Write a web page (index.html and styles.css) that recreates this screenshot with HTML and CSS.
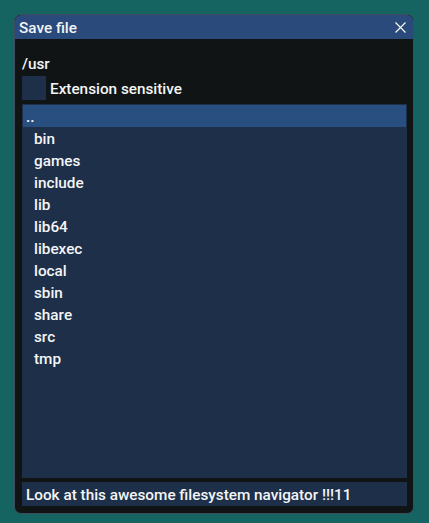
FILE: index.html
```html
<!DOCTYPE html>
<html>
<head>
<meta charset="utf-8">
<link rel="stylesheet" href="styles.css">
</head>
<body>
<div class="window">
  <div class="titlebar">
    <span class="title">Save file</span>
    <svg class="close" width="11" height="11" viewBox="0 0 11 11"><path d="M0.5 0.5 L10.5 10.5 M10.5 0.5 L0.5 10.5" stroke="#fff" stroke-width="1.1" fill="none"/></svg>
  </div>
  <div class="body">
    <div class="text">/usr</div>
    <div class="checkrow">
      <span class="checkbox"></span>
      <span class="label">Extension sensitive</span>
    </div>
    <div class="listbox">
      <div class="item selected">..</div>
      <div class="item dir">bin</div>
      <div class="item dir">games</div>
      <div class="item dir">include</div>
      <div class="item dir">lib</div>
      <div class="item dir">lib64</div>
      <div class="item dir">libexec</div>
      <div class="item dir">local</div>
      <div class="item dir">sbin</div>
      <div class="item dir">share</div>
      <div class="item dir">src</div>
      <div class="item dir">tmp</div>
    </div>
    <div class="footer">Look at this awesome filesystem navigator !!!11</div>
  </div>
</div>
</body>
</html>
```
FILE: styles.css
```css
html, body {
  margin: 0;
  padding: 0;
}
body {
  background: #156461;
  width: 429px;
  height: 523px;
  overflow: hidden;
  font-family: Roboto, "Liberation Sans", sans-serif;
  font-size: 15.3px;
  font-weight: 500;
  color: #f4f5f6;
}
.window {
  margin: 14px 0 0 14px;
  width: 400px;
  height: 500px;
  box-sizing: border-box;
  border: 1px solid #3e4d5c;
  border-radius: 7px;
  background: #101414;
  overflow: hidden;
  display: flex;
  flex-direction: column;
}
.titlebar {
  height: 24px;
  box-sizing: border-box;
  flex: none;
  background: #294a7a;
  display: flex;
  align-items: center;
  justify-content: space-between;
  padding: 1px 7px 0 4px;
  line-height: 18px;
}
.close {
  display: block;
  margin-top: -1px;
}
.body {
  flex: 1;
  display: flex;
  flex-direction: column;
  gap: 4px;
  padding: 15px 6px 7px 7px;
  min-height: 0;
}
.text {
  line-height: 18px;
  padding-top: 1px;
  height: 18px;
  box-sizing: border-box;
}
.checkrow {
  display: flex;
  align-items: center;
  gap: 4px;
  height: 24px;
  line-height: 18px;
}
.label {
  padding-top: 1px;
}
.checkbox {
  width: 24px;
  height: 24px;
  background: #1d2f49;
}
.listbox {
  flex: 1;
  background: #1d2f49;
  padding: 1px;
  min-height: 0;
}
.item {
  height: 22px;
  line-height: 24px;
  padding-left: 3px;
  overflow: hidden;
}
.item.dir {
  padding-left: 11px;
}
.item.selected {
  background: #294f80;
}
.footer {
  height: 24px;
  box-sizing: border-box;
  flex: none;
  background: #1d2f49;
  padding: 4px 4px 2px;
  line-height: 18px;
}
```
